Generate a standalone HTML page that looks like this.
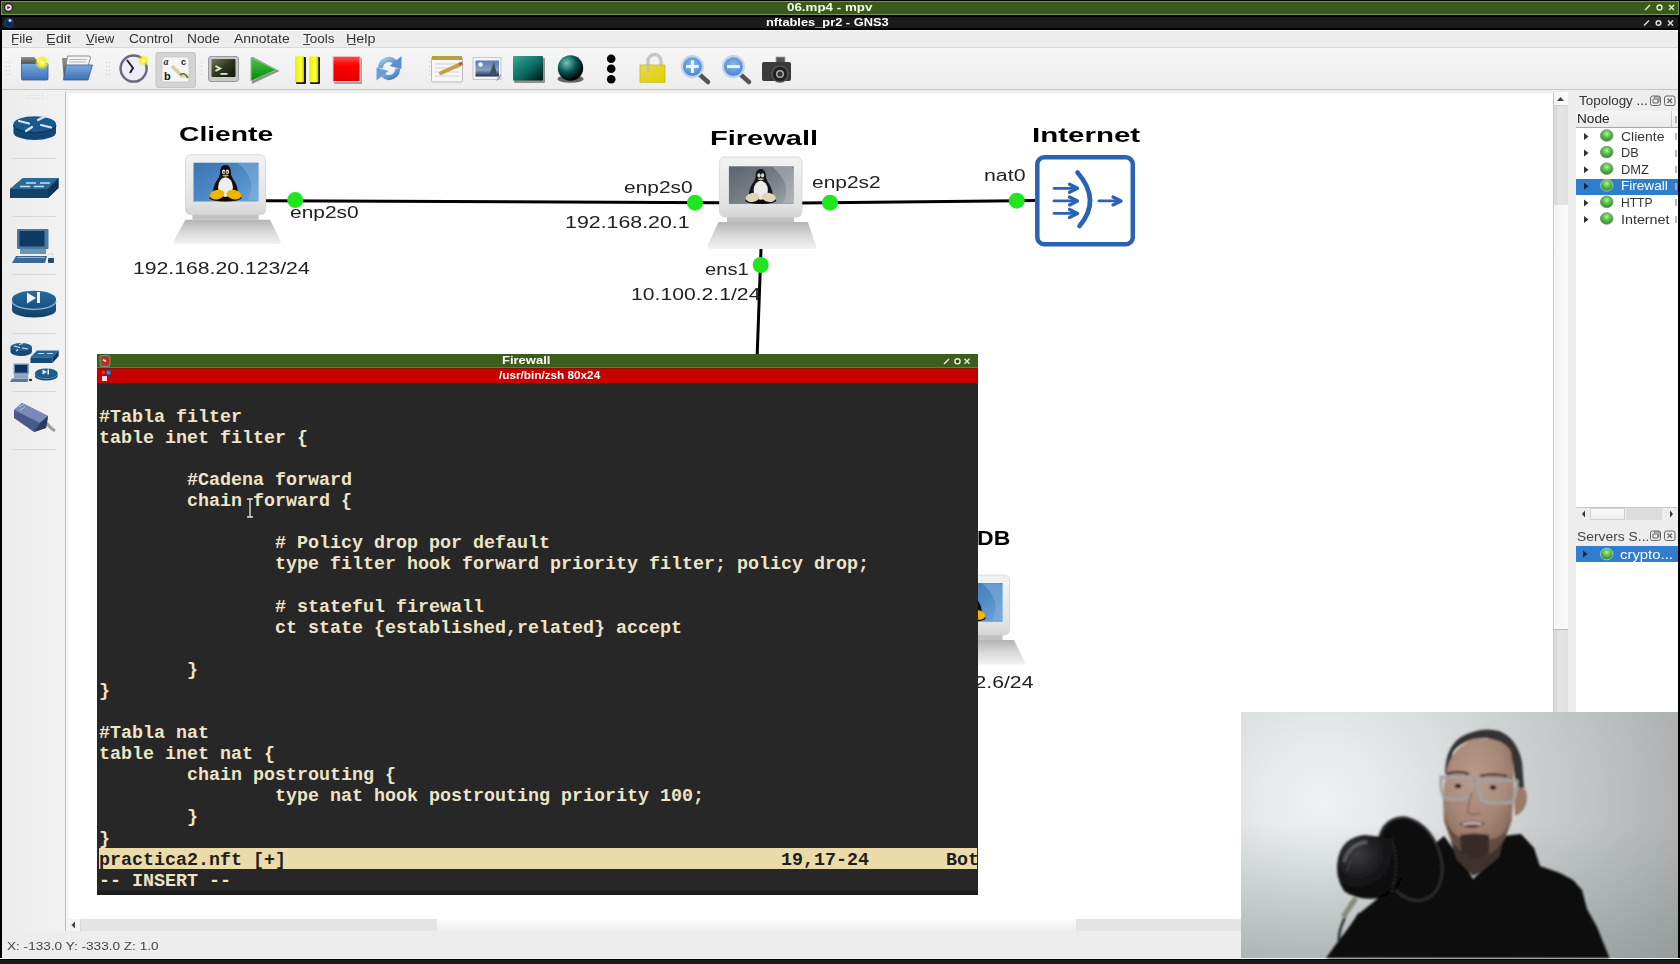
<!DOCTYPE html>
<html><head><meta charset="utf-8">
<style>
*{margin:0;padding:0;box-sizing:border-box}
html,body{width:1680px;height:964px;overflow:hidden;background:#000;font-family:"Liberation Sans",sans-serif;position:relative}
.a{position:absolute}
.lb{white-space:pre;transform-origin:0 0}
.term{font-family:"Liberation Mono",monospace;font-weight:bold;font-size:18.33px;line-height:21.1px;color:#eee4c8;white-space:pre}
svg{position:absolute;overflow:visible}
</style></head><body>
<!-- title bars -->
<div class="a" style="left:1px;top:1px;width:1678px;height:14px;background:#3a5a1b;border:1px solid #77925c"></div>
<div class="a" style="left:2px;top:16.7px;width:1676px;height:11.5px;background:#1b1b1b"></div>
<svg style="left:0;top:0" width="1680" height="30">
  <circle cx="8.5" cy="7.5" r="4.5" fill="#2a1a2a"/><circle cx="8.5" cy="7.5" r="3.3" fill="#f2d8f2"/><path d="M7.3 5.7 L10.3 7.5 L7.3 9.3Z" fill="#4a1a4a"/>
  <circle cx="9" cy="23" r="5" fill="#1a3a6a"/><circle cx="9" cy="23.5" r="3.5" fill="#0a2a5a"/><circle cx="10" cy="20.5" r="1.5" fill="#c8d8f8"/>
  <g stroke="#e8f0e0" stroke-width="1.3" fill="none">
    <path d="M1645 10 L1650 5"/><circle cx="1659.5" cy="7.5" r="2.5"/><path d="M1669 5 L1674 10 M1674 5 L1669 10"/>
  </g>
  <g stroke="#e0e0e0" stroke-width="1.5" fill="none">
    <path d="M1644 25.5 L1649 20.5"/><circle cx="1658.5" cy="23" r="2.3"/><path d="M1668 20.5 L1673 25.5 M1673 20.5 L1668 25.5"/>
  </g>
</svg>

<!-- main window -->
<div class="a" style="left:2px;top:29.5px;width:1676px;height:929.5px;background:#ededed"></div>
<div class="a" style="left:2px;top:29.5px;width:1676px;height:1.3px;background:#fafafa"></div>
<div class="a" style="left:2px;top:47px;width:1676px;height:1px;background:#dadada"></div>
<!-- menu underlines -->
<div class="a" style="left:12px;top:44px;width:6px;height:1px;background:#444"></div>
<div class="a" style="left:47.5px;top:44px;width:7px;height:1px;background:#444"></div>
<div class="a" style="left:85.5px;top:44px;width:8px;height:1px;background:#444"></div>
<div class="a" style="left:302.5px;top:44px;width:7px;height:1px;background:#444"></div>
<div class="a" style="left:347.5px;top:44px;width:8px;height:1px;background:#444"></div>
<!-- toolbar -->
<div class="a" style="left:2px;top:48px;width:1676px;height:41px;background:linear-gradient(#f6f6f6,#ededed)"></div>
<div class="a" style="left:2px;top:89px;width:1676px;height:1px;background:#c6c6c6"></div>
<svg style="left:0;top:0" width="800" height="92">
  <defs>
    <linearGradient id="fblue" x1="0" y1="0" x2="0" y2="1"><stop offset="0" stop-color="#7aaae0"/><stop offset="1" stop-color="#3a6fb8"/></linearGradient>
    <linearGradient id="fgray" x1="0" y1="0" x2="0" y2="1"><stop offset="0" stop-color="#909090"/><stop offset="1" stop-color="#505050"/></linearGradient>
    <radialGradient id="yel" cx="0.5" cy="0.5" r="0.5"><stop offset="0" stop-color="#ffffe0"/><stop offset="0.45" stop-color="#f4f020"/><stop offset="1" stop-color="#f4f020" stop-opacity="0"/></radialGradient>
    <linearGradient id="term" x1="0" y1="0" x2="1" y2="1"><stop offset="0" stop-color="#707a50"/><stop offset="0.5" stop-color="#2e3620"/><stop offset="1" stop-color="#101808"/></linearGradient>
    <linearGradient id="play" x1="0" y1="0" x2="0" y2="1"><stop offset="0" stop-color="#50c050"/><stop offset="1" stop-color="#008a00"/></linearGradient>
    <linearGradient id="pause" x1="0" y1="0" x2="1" y2="0"><stop offset="0" stop-color="#e8f000"/><stop offset="0.7" stop-color="#ffff40"/><stop offset="1" stop-color="#c0c000"/></linearGradient>
    <linearGradient id="stop" x1="0" y1="0" x2="0" y2="1"><stop offset="0" stop-color="#ff5050"/><stop offset="0.35" stop-color="#ff0000"/><stop offset="1" stop-color="#e00000"/></linearGradient>
    <linearGradient id="refr" x1="0" y1="0" x2="1" y2="1"><stop offset="0" stop-color="#a8c8ea"/><stop offset="1" stop-color="#3a78c0"/></linearGradient>
    <linearGradient id="teal" x1="0" y1="0" x2="1" y2="1"><stop offset="0" stop-color="#3aa898"/><stop offset="0.55" stop-color="#0a6a60"/><stop offset="1" stop-color="#001010"/></linearGradient>
    <radialGradient id="sph" cx="0.35" cy="0.3" r="0.7"><stop offset="0" stop-color="#70c8c0"/><stop offset="0.5" stop-color="#0a5a58"/><stop offset="1" stop-color="#000"/></radialGradient>
    <linearGradient id="lock" x1="0" y1="0" x2="1" y2="1"><stop offset="0" stop-color="#e8d850"/><stop offset="1" stop-color="#e0d000"/></linearGradient>
    <radialGradient id="zoom" cx="0.5" cy="0.4" r="0.55"><stop offset="0" stop-color="#8ab8ee"/><stop offset="1" stop-color="#4a88d0"/></radialGradient>
    <linearGradient id="img" x1="0" y1="0" x2="0" y2="1"><stop offset="0" stop-color="#5a7ab0"/><stop offset="0.6" stop-color="#8aa0c0"/><stop offset="1" stop-color="#1a2a50"/></linearGradient>
  </defs>
  <!-- handles -->
  <g fill="#c8c8c8">
    <rect x="6" y="62" width="1" height="1"/><rect x="9" y="62" width="1" height="1"/><rect x="6" y="66" width="1" height="1"/><rect x="9" y="66" width="1" height="1"/><rect x="6" y="70" width="1" height="1"/><rect x="9" y="70" width="1" height="1"/><rect x="6" y="74" width="1" height="1"/><rect x="9" y="74" width="1" height="1"/>
    <rect x="106" y="62" width="1" height="1"/><rect x="109" y="62" width="1" height="1"/><rect x="106" y="66" width="1" height="1"/><rect x="109" y="66" width="1" height="1"/><rect x="106" y="70" width="1" height="1"/><rect x="109" y="70" width="1" height="1"/><rect x="106" y="74" width="1" height="1"/><rect x="109" y="74" width="1" height="1"/>
    <rect x="201" y="62" width="1" height="1"/><rect x="201" y="66" width="1" height="1"/><rect x="201" y="70" width="1" height="1"/><rect x="201" y="74" width="1" height="1"/>
    <rect x="429" y="62" width="1" height="1"/><rect x="429" y="66" width="1" height="1"/><rect x="429" y="70" width="1" height="1"/><rect x="429" y="74" width="1" height="1"/>
  </g>
  <!-- new folder -->
  <path d="M21 57 L34 57 L37 60 L37 64 L21 64Z" fill="url(#fgray)"/>
  <rect x="21.5" y="63.5" width="26.5" height="16.5" rx="1" fill="url(#fblue)" stroke="#3a5a8a" stroke-width="0.8"/>
  <circle cx="42" cy="62.5" r="7.5" fill="url(#yel)"/>
  <!-- open folder -->
  <path d="M62 58 L69 58 L69 80 L64 80Z" fill="url(#fgray)"/>
  <path d="M67.5 56 L89 56 Q91 56 90.5 58 L88 66 L66 66Z" fill="#f4f4f4" stroke="#909090" stroke-width="1"/>
  <path d="M69 59.5 H87 M69 62 H86" stroke="#b8b8b8" stroke-width="1"/>
  <path d="M66 65 L92.5 65 L88 80 L63.5 80Z" fill="url(#fblue)" stroke="#3a5a8a" stroke-width="0.8"/>
  <!-- clock -->
  <circle cx="133.6" cy="68.6" r="13" fill="#eeeef6" stroke="#6a6a7a" stroke-width="2.5"/>
  <path d="M127 60 L133 68 L130 73" stroke="#222" stroke-width="2" fill="none"/>
  <circle cx="143.5" cy="60.5" r="6" fill="url(#yel)"/>
  <!-- abc pressed -->
  <rect x="156" y="52.5" width="39.5" height="35" rx="2" fill="#d4d4d4" stroke="#c4c4c4" stroke-width="1"/>
  <rect x="162" y="57" width="27" height="25" rx="2.5" fill="#f6f6f6" stroke="#c8c8c8" stroke-width="0.8"/>
  <text x="163.5" y="65" font-family="Liberation Serif" font-style="italic" font-weight="bold" font-size="10" fill="#333">a</text>
  <text x="164" y="80" font-family="Liberation Sans" font-weight="bold" font-size="11" fill="#111">b</text>
  <text x="181" y="65" font-family="Liberation Sans" font-weight="bold" font-size="9" fill="#222">c</text>
  <path d="M172 66 L182 76 Q186 74 188 78" stroke="#d8d0a0" stroke-width="3.5" fill="none"/>
  <path d="M180 75 Q184 71 188 78" stroke="#444" stroke-width="1.2" fill="none"/>
  <!-- terminal -->
  <rect x="208.5" y="56.5" width="30" height="25" rx="2.5" fill="#c8c8c8" stroke="#9a9a9a" stroke-width="1"/>
  <rect x="211.5" y="59" width="24" height="18" rx="1" fill="url(#term)"/>
  <path d="M215.5 66 L220 68.5 L215.5 71" stroke="#e0f0d0" stroke-width="2" fill="none"/>
  <rect x="220.5" y="73" width="7" height="1.8" fill="#d8e8c8"/>
  <!-- play -->
  <path d="M252 56.5 L279.5 71 L252 84Z" fill="#444" opacity="0.55"/>
  <path d="M251 57.5 L276 70 L251 81Z" fill="url(#play)" stroke="#7ac87a" stroke-width="1"/>
  <!-- pause -->
  <rect x="296" y="57" width="10" height="27" rx="1" fill="#1a1a1a"/>
  <rect x="310" y="57" width="10" height="27" rx="1" fill="#1a1a1a"/>
  <rect x="295" y="56.2" width="9" height="26" rx="1" fill="url(#pause)"/>
  <rect x="309.3" y="56.2" width="9" height="26" rx="1" fill="url(#pause)"/>
  <!-- stop -->
  <rect x="334" y="58" width="28" height="26" fill="#888" opacity="0.7"/>
  <rect x="333" y="56.5" width="27" height="25" fill="url(#stop)" stroke="#f0c0c0" stroke-width="1"/>
  <!-- refresh -->
  <g fill="none" stroke="url(#refr)" stroke-width="5">
    <path d="M380.5 68 A8.5 8.5 0 0 1 395 62"/>
    <path d="M397.5 68.5 A8.5 8.5 0 0 1 383 75"/>
  </g>
  <path d="M401.5 56 L401.5 69 L389.5 66Z" fill="#5a90d0"/>
  <path d="M376.5 80.5 L376.5 67.5 L388.5 71Z" fill="#6a9cd8"/>
  <!-- notepad -->
  <rect x="431.5" y="57" width="31" height="25" rx="1.5" fill="#f6f6f6" stroke="#b8b8b8" stroke-width="1"/>
  <rect x="432" y="56" width="30" height="4" fill="#b8a040"/>
  <path d="M435 64 H459 M435 68 H459 M435 72 H459 M435 76 H459" stroke="#d0d0d8" stroke-width="1"/>
  <path d="M441 73 L461 64" stroke="#c8a040" stroke-width="4" stroke-linecap="round"/>
  <path d="M459 64.5 L462 63" stroke="#a06040" stroke-width="3"/>
  <!-- image -->
  <rect x="473" y="57.5" width="28" height="22" fill="#f4f4f4" stroke="#c8c8d0" stroke-width="1"/>
  <rect x="475.5" y="60.5" width="23.5" height="16" fill="url(#img)"/>
  <circle cx="480.5" cy="64.5" r="2.3" fill="#f0f4ff"/>
  <path d="M489 75 L494 62 L497 75Z" fill="#405070"/>
  <path d="M496 81 Q501 79 501 74 L498 77Z" fill="#a0a0a8"/>
  <!-- teal rect -->
  <rect x="514" y="58" width="31" height="25" rx="1" fill="#303030" opacity="0.5"/>
  <rect x="513" y="56" width="30" height="24.5" rx="1" fill="url(#teal)"/>
  <!-- sphere -->
  <ellipse cx="570.5" cy="79" rx="13" ry="3.8" fill="#333" opacity="0.75"/>
  <circle cx="570.5" cy="68" r="12.7" fill="url(#sph)"/>
  <!-- dots -->
  <circle cx="611.2" cy="58.8" r="4.3" fill="#000"/><circle cx="611.2" cy="68.8" r="4.3" fill="#000"/><circle cx="611.2" cy="79.2" r="4.3" fill="#000"/>
  <!-- lock -->
  <path d="M648 67 L648 61 A6.5 6.5 0 0 1 661 61 L661 66" stroke="#c8c8c8" stroke-width="3.5" fill="none"/>
  <rect x="640" y="65" width="25" height="17.3" fill="url(#lock)" stroke="#c8b820" stroke-width="0.8"/>
  <path d="M648 65 L648 72" stroke="#c0c0b0" stroke-width="2.5"/>
  <!-- zoom in -->
  <path d="M699 74 L708 82" stroke="#555" stroke-width="4.5" stroke-linecap="round"/>
  <circle cx="692.4" cy="66.6" r="10.5" fill="url(#zoom)" stroke="#c0d4ea" stroke-width="2.2"/>
  <path d="M686 66.6 H698.8 M692.4 60.2 V73" stroke="#f0f6ff" stroke-width="3"/>
  <!-- zoom out -->
  <path d="M740 74 L749 82" stroke="#555" stroke-width="4.5" stroke-linecap="round"/>
  <circle cx="733.4" cy="66.6" r="10.5" fill="url(#zoom)" stroke="#c0d4ea" stroke-width="2.2"/>
  <path d="M727 66.6 H739.8" stroke="#f0f6ff" stroke-width="3"/>
  <!-- camera -->
  <rect x="776" y="57" width="9" height="6" fill="#555" stroke="#aaa" stroke-width="0.8"/>
  <path d="M762 64 Q762 62 764 62 L789 62 Q791 62 791 64 L791 79 Q791 81 789 81 L764 81 Q762 81 762 79Z" fill="#3a3a3a"/>
  <circle cx="780" cy="74" r="8" fill="#222" stroke="#555" stroke-width="1.5"/>
  <circle cx="780" cy="74" r="4" fill="#aaa"/>
  <circle cx="780" cy="74" r="2.5" fill="#333"/>
</svg>


<!-- left dock -->
<div class="a" style="left:2px;top:90px;width:63px;height:841px;background:linear-gradient(90deg,#ececec,#f2f2f2)"></div>
<div class="a" style="left:65px;top:92px;width:1px;height:839px;background:#bcbcbc"></div>
<svg style="left:0;top:0" width="70" height="964">
  <defs>
    <linearGradient id="cb" x1="0" y1="0" x2="0" y2="1"><stop offset="0" stop-color="#1f6494"/><stop offset="1" stop-color="#123e66"/></linearGradient>
    <linearGradient id="ct" x1="0" y1="0" x2="0" y2="1"><stop offset="0" stop-color="#2a6a9a"/><stop offset="1" stop-color="#1a5282"/></linearGradient>
  </defs>
  <g fill="#d0d0d0">
    <rect x="27" y="95" width="1" height="1"/><rect x="30" y="95" width="1" height="1"/><rect x="33" y="95" width="1" height="1"/><rect x="36" y="95" width="1" height="1"/><rect x="39" y="95" width="1" height="1"/><rect x="42" y="95" width="1" height="1"/>
    <rect x="27" y="98" width="1" height="1"/><rect x="30" y="98" width="1" height="1"/><rect x="33" y="98" width="1" height="1"/><rect x="36" y="98" width="1" height="1"/><rect x="39" y="98" width="1" height="1"/><rect x="42" y="98" width="1" height="1"/>
  </g>
  <g stroke="#d8d8d8" stroke-width="1">
    <path d="M12 158.5 H56 M12 216.5 H56 M12 274.5 H56 M12 333.5 H56 M12 391.5 H56 M12 449.5 H56"/>
  </g>
  <!-- router -->
  <path d="M13.5 124 L13.5 132.5 A21.25 7.5 0 0 0 56 132.5 L56 124Z" fill="#134676"/>
  <ellipse cx="34.75" cy="124" rx="21.25" ry="7.8" fill="#1c5a8c"/>
  <path d="M13.5 125 A21.25 7.8 0 0 0 56 125" stroke="#0c3458" stroke-width="1" fill="none"/>
  <g stroke="#d8e8f4" stroke-width="2.2" stroke-linecap="round">
    <path d="M19 121 L29 123.5 M41 125 L51 127.5 M32 127 L26 131 M38 120 L45 116.5"/>
  </g>
  <!-- switch -->
  <path d="M10 189 L23 178 L58.5 178 L58.5 188 L48 198 L10 198Z" fill="#12426a"/>
  <path d="M10 189 L23 178 L58.5 178 L48 189Z" fill="#2a6a98"/>
  <path d="M48 189 L58.5 178 L58.5 188 L48 198Z" fill="#0e3558"/>
  <g stroke="#c8e0f0" stroke-width="1.6"><path d="M26 183 H36 M40 183 H50 M20 186.5 H30 M34 186.5 H44"/></g>
  <!-- pc -->
  <rect x="17" y="229" width="31.5" height="20" rx="1" fill="#4a7aa0"/>
  <rect x="19.5" y="231" width="25" height="15.5" fill="#0f3a64"/>
  <rect x="20" y="249" width="26" height="5" fill="#6a94b8"/>
  <path d="M16 256 L47 256 L45 263 L12 263Z" fill="#3a6a94"/>
  <path d="M17 257.5 L45 257.5" stroke="#8ab4d8" stroke-width="1"/>
  <rect x="48" y="258" width="6" height="5" rx="1" fill="#2a4a6a"/>
  <path d="M47 255 Q55 251 52 258" stroke="#c8d8e8" stroke-width="1" fill="none"/>
  <!-- media device -->
  <path d="M12 299 L12 310 A22 7.5 0 0 0 56 310 L56 299Z" fill="url(#cb)"/>
  <ellipse cx="34" cy="299" rx="22" ry="8.3" fill="url(#ct)"/>
  <path d="M12 301 A22 8.3 0 0 0 56 301" stroke="#8ab8dc" stroke-width="1.2" fill="none"/>
  <path d="M27 292.5 L36 298 L27 303.5Z" fill="#eef4f8"/>
  <rect x="37" y="292" width="3" height="11" fill="#eef4f8"/>
  <!-- all devices -->
  <path d="M10.5 347 L10.5 352 A10.7 4 0 0 0 31.9 352 L31.9 347Z" fill="#154a78"/>
  <ellipse cx="21.2" cy="347" rx="10.7" ry="4" fill="#1e5e8e"/>
  <path d="M14 346 L20 347.5 M22 348 L28 349 M19 344.5 L23 343.5 M18 349.5 L16 351" stroke="#d0e4f0" stroke-width="1.2"/>
  <path d="M30.5 357.3 L37 350.4 L58.7 350.4 L52.5 357.3Z" fill="#2a6898"/>
  <path d="M30.5 357.3 L52.5 357.3 L52.5 363 L30.5 363Z" fill="#154a78"/>
  <path d="M52.5 357.3 L58.7 350.4 L58.7 356 L52.5 363Z" fill="#0e3a60"/>
  <path d="M38 353.5 H44 M47 353.5 H53" stroke="#b8d4e8" stroke-width="1"/>
  <rect x="13.6" y="363.6" width="15.1" height="11" fill="#6a8cb0"/><rect x="15" y="365" width="12.3" height="7.5" fill="#102e5e"/>
  <path d="M14 375 L28 375 L28 378 L14 378Z" fill="#8aa4c0"/>
  <path d="M12 378.5 L28.5 378.5 L27.5 382 L10 382Z" fill="#5a7a9a"/>
  <ellipse cx="30.5" cy="380" rx="1.6" ry="1.3" fill="#333"/>
  <path d="M35 373 L35 376.5 A11.3 4 0 0 0 57.6 376.5 L57.6 373Z" fill="#154a78"/>
  <ellipse cx="46.3" cy="373" rx="11.3" ry="4.6" fill="#1e5e8e"/>
  <path d="M35 374 A11.3 4.6 0 0 0 57.6 374" stroke="#6a9ac0" stroke-width="0.8" fill="none"/>
  <path d="M42.5 369.5 L47 372 L42.5 374.5Z" fill="#eef4f8"/><rect x="47.5" y="369.5" width="1.5" height="5" fill="#eef4f8"/>
  <!-- cable -->
  <path d="M44 420 Q50 428 55 431" stroke="#888" stroke-width="3" fill="none" opacity="0.8"/>
  <path d="M14 410 L22 403 L48 416 L46 428 L34 432 L14 418Z" fill="#4a5a88"/>
  <path d="M14 410 L22 403 L48 416 L40 423Z" fill="#7a8ab8"/>
  <path d="M40 423 L48 416 L46 428 L34 432Z" fill="#2a3a60"/>
  <path d="M19 407 L24 404 M20 410 L25 407" stroke="#c8d0e8" stroke-width="0.8"/>
</svg>


<!-- canvas -->
<div class="a" style="left:66px;top:92.5px;width:1487px;height:826.5px;background:linear-gradient(90deg,#f4f4f4,#fff 5px)"></div>
<svg style="left:0;top:0" width="1680" height="964">
  <defs>
    <linearGradient id="mon" x1="0" y1="0" x2="0" y2="1"><stop offset="0" stop-color="#f2f2f2"/><stop offset="0.8" stop-color="#e2e2e2"/><stop offset="1" stop-color="#d4d4d4"/></linearGradient>
    <linearGradient id="base" x1="0" y1="0" x2="0" y2="1"><stop offset="0" stop-color="#b4b4b4"/><stop offset="0.55" stop-color="#dcdcdc"/><stop offset="1" stop-color="#f2f2f2"/></linearGradient>
    <linearGradient id="scrB" x1="0" y1="0" x2="1" y2="1"><stop offset="0" stop-color="#3a74b4"/><stop offset="0.55" stop-color="#4f8ac6"/><stop offset="1" stop-color="#6fa4d6"/></linearGradient>
    <linearGradient id="scrG" x1="0" y1="0" x2="1" y2="1"><stop offset="0" stop-color="#5c636c"/><stop offset="0.55" stop-color="#7a8088"/><stop offset="1" stop-color="#a0a6ac"/></linearGradient>
    <symbol id="tuxc" viewBox="0 0 33 37" overflow="visible">
      <ellipse cx="16.5" cy="33.3" rx="16.3" ry="3.7" fill="#0a0a0a"/>
      <path d="M16.5 0 C12.5 0 11 3.5 11 8 C11 12 7.5 15 5.5 20 C3.5 25 3.5 29 6 31 L27 31 C29.5 29 29.5 25 27.5 20 C25.5 15 22 12 22 8 C22 3.5 20.5 0 16.5 0Z" fill="#0d0d0d"/>
      <ellipse cx="16.5" cy="22.5" rx="7.5" ry="10" fill="#eeeeee"/>
      <ellipse cx="14.6" cy="6.8" rx="1.7" ry="2.2" fill="#e8e8e8"/><ellipse cx="18.4" cy="6.8" rx="1.7" ry="2.2" fill="#e8e8e8"/>
      <circle cx="14.9" cy="7.2" r="0.8" fill="#111"/><circle cx="18.1" cy="7.2" r="0.8" fill="#111"/>
      <path d="M13 10.5 Q16.5 8.8 20 10.5 Q16.5 13.5 13 10.5Z" fill="#e8a800"/>
      <ellipse cx="8" cy="30" rx="7.5" ry="4.8" transform="rotate(-12 8 30)" fill="#f2b400"/>
      <ellipse cx="25" cy="30" rx="7.5" ry="4.8" transform="rotate(12 25 30)" fill="#f2b400"/>
    </symbol>
    <symbol id="tuxg" viewBox="0 0 33 37" overflow="visible">
      <ellipse cx="16.5" cy="33.3" rx="16.3" ry="3.7" fill="#0a0a0a"/>
      <path d="M16.5 0 C12.5 0 11 3.5 11 8 C11 12 7.5 15 5.5 20 C3.5 25 3.5 29 6 31 L27 31 C29.5 29 29.5 25 27.5 20 C25.5 15 22 12 22 8 C22 3.5 20.5 0 16.5 0Z" fill="#151515"/>
      <ellipse cx="16.5" cy="22.5" rx="7.5" ry="10" fill="#ececec"/>
      <ellipse cx="14.6" cy="6.8" rx="1.7" ry="2.2" fill="#d8d8d8"/><ellipse cx="18.4" cy="6.8" rx="1.7" ry="2.2" fill="#d8d8d8"/>
      <path d="M13 10.5 Q16.5 8.8 20 10.5 Q16.5 13.5 13 10.5Z" fill="#c8c0a0"/>
      <ellipse cx="8" cy="30" rx="7.5" ry="4.8" transform="rotate(-12 8 30)" fill="#ddd6b8"/>
      <ellipse cx="25" cy="30" rx="7.5" ry="4.8" transform="rotate(12 25 30)" fill="#ddd6b8"/>
    </symbol>
  </defs>
  <!-- links -->
  <g stroke="#000" stroke-width="3" fill="none">
    <path d="M266 200.8 L720 202.8"/>
    <path d="M802 203 L1035 200.5"/>
    <path d="M761 249 L757 360"/>
  </g>
  <!-- Cliente laptop -->
  <g id="lapC">
    <path d="M185.5 219.8 L270 219.8 L280.5 241 Q282 244.3 278 244.3 L176 244.3 Q172 244.3 173.5 241Z" fill="url(#base)"/>
    <rect x="192.4" y="213" width="66.2" height="6.8" fill="#c2c2c2"/>
    <rect x="185.5" y="154.7" width="80" height="60" rx="5" fill="url(#mon)" stroke="#d2d2d2" stroke-width="0.8"/>
    <rect x="193.5" y="162.7" width="65" height="38.8" fill="url(#scrB)"/>
    <path d="M238 163 L254 163 Q258.5 163 258.5 168 L258.5 200 L248 200 Q258 180 238 163Z" fill="#8ab8e4" opacity="0.45"/>
    <use href="#tuxc" x="209" y="165" width="33" height="36.5"/>
  </g>
  <!-- DB laptop -->
  <use href="#lapC" x="744" y="420.3"/>
  <!-- Firewall laptop -->
  <path d="M718.5 221.9 L807.8 221.9 L816 245.5 Q817 249 813 249 L711 249 Q706.5 249 707.5 245.5Z" fill="url(#base)"/>
  <rect x="727" y="216" width="67" height="6" fill="#c2c2c2"/>
  <rect x="719.6" y="157" width="82.3" height="60" rx="5" fill="url(#mon)" stroke="#d2d2d2" stroke-width="0.8"/>
  <rect x="728.9" y="166.3" width="64.8" height="37.7" fill="url(#scrG)"/>
  <path d="M772 166.5 L789 166.5 Q793.5 166.5 793.5 171 L793.5 203 L783 203 Q793 184 772 166.5Z" fill="#c0c4c8" opacity="0.45"/>
  <use href="#tuxg" x="743.6" y="169" width="34.3" height="35"/>
  <!-- Internet NAT -->
  <rect x="1037.3" y="157.3" width="95.5" height="87" rx="7" fill="#fff" stroke="#2a62b6" stroke-width="4.5"/>
  <g stroke="#2a62b6" fill="none" stroke-linecap="round" stroke-linejoin="round">
    <path d="M1054 188.3 H1076 M1054 200.9 H1076 M1054 213.4 H1076" stroke-width="2.8"/>
    <path d="M1069.5 184.3 L1077.5 188.3 L1069.5 192.3 M1069.5 196.9 L1077.5 200.9 L1069.5 204.9 M1069.5 209.4 L1077.5 213.4 L1069.5 217.4" stroke-width="3.3"/>
    <path d="M1077.5 172.5 Q1101.5 200 1079.5 226" stroke-width="4.6"/>
    <path d="M1099 200.9 H1119" stroke-width="2.8"/>
    <path d="M1113 196.9 L1121 200.9 L1113 204.9" stroke-width="3.3"/>
  </g>
  <!-- port dots -->
  <g fill="#1fe61f">
    <circle cx="295.2" cy="200.1" r="8"/>
    <circle cx="695" cy="202.7" r="8"/>
    <circle cx="830" cy="202.7" r="8"/>
    <circle cx="1016.7" cy="200.7" r="8"/>
    <circle cx="760.7" cy="265" r="8"/>
  </g>
</svg>


<!-- vertical scrollbar -->
<div class="a" style="left:1553px;top:92px;width:15px;height:620px;background:linear-gradient(90deg,#f4f4f4,#fafafa)"></div>
<div class="a" style="left:1553px;top:92px;width:1px;height:620px;background:#c8c8c8"></div>
<div class="a" style="left:1553px;top:105px;width:15px;height:1px;background:#d0d0d0"></div>
<div class="a" style="left:1554px;top:106px;width:14px;height:99px;background:linear-gradient(90deg,#d8d8d8,#e4e4e4 40%,#e0e0e0)"></div>
<div class="a" style="left:1554px;top:629px;width:14px;height:83px;background:linear-gradient(90deg,#d8d8d8,#e4e4e4 40%,#e0e0e0)"></div>
<div class="a" style="left:1553px;top:629px;width:15px;height:1px;background:#b8b8b8"></div>
<svg style="left:0;top:0" width="1680" height="964"><path d="M1557 101 L1560.5 97 L1564 101Z" fill="#444"/></svg>

<!-- right dock -->
<div class="a" style="left:1568px;top:90px;width:110px;height:622px;background:#ededed"></div>
<div class="a" style="left:1576px;top:111px;width:102px;height:17px;background:linear-gradient(#f6f6f6,#eaeaea)"></div>
<div class="a" style="left:1576px;top:127px;width:102px;height:1px;background:#a8a8a8"></div>
<div class="a" style="left:1671px;top:111px;width:1px;height:16px;background:#c8c8c8"></div>
<div class="a" style="left:1576px;top:128px;width:102px;height:379px;background:#fff"></div>
<div class="a" style="left:1576px;top:178.6px;width:102px;height:16px;background:#2f7dcb"></div>
<div class="a" style="left:1576px;top:507px;width:102px;height:13px;background:#ededed;border-top:1px solid #c8c8c8"></div>
<div class="a" style="left:1590px;top:508px;width:35px;height:12px;background:linear-gradient(#fafafa,#eeeeee);border:1px solid #d0d0d0"></div>
<div class="a" style="left:1626px;top:508px;width:36px;height:12px;background:#dcdcdc"></div>
<div class="a" style="left:1576px;top:546px;width:102px;height:166px;background:#fff"></div>
<div class="a" style="left:1576px;top:546px;width:102px;height:15.7px;background:#2f7dcb"></div>
<svg style="left:0;top:0" width="1680" height="964">
  <defs>
    <radialGradient id="led" cx="0.5" cy="0.35" r="0.6"><stop offset="0" stop-color="#b8f0a8"/><stop offset="0.45" stop-color="#5cc84a"/><stop offset="1" stop-color="#3a8a30"/></radialGradient>
  </defs>
  <g fill="#333">
    <path d="M1584 133 L1588.5 136.5 L1584 140Z"/>
    <path d="M1584 149.6 L1588.5 153.1 L1584 156.6Z"/>
    <path d="M1584 166.2 L1588.5 169.7 L1584 173.2Z"/>
    <path d="M1584 182.8 L1588.5 186.3 L1584 189.8Z" fill="#0a2a4a"/>
    <path d="M1584 199.4 L1588.5 202.9 L1584 206.4Z"/>
    <path d="M1584 216 L1588.5 219.5 L1584 223Z"/>
    <path d="M1583 550.5 L1587.5 554 L1583 557.5Z" fill="#0a2a4a"/>
    <path d="M1582 514 L1585 510.5 L1585 517.5Z"/>
    <path d="M1673 514 L1670 510.5 L1670 517.5Z"/>
  </g>
  <g fill="url(#led)" stroke="#7a8a78" stroke-width="0.8">
    <ellipse cx="1606.7" cy="135.5" rx="6.3" ry="5.8"/>
    <ellipse cx="1606.7" cy="152.1" rx="6.3" ry="5.8"/>
    <ellipse cx="1606.7" cy="168.7" rx="6.3" ry="5.8"/>
    <ellipse cx="1606.7" cy="185.3" rx="6.3" ry="5.8" stroke="#a8d0f0"/>
    <ellipse cx="1606.7" cy="201.9" rx="6.3" ry="5.8"/>
    <ellipse cx="1606.7" cy="218.5" rx="6.3" ry="5.8"/>
    <ellipse cx="1606.7" cy="554" rx="6.3" ry="5.8" stroke="#a8d0f0"/>
  </g>
  <g stroke="#777" stroke-width="1">
    <path d="M1676 133 V140 M1676 150 V157 M1676 166 V173 M1676 199 V206 M1676 216 V223 M1676 116 V123"/>
    <path d="M1676 183 V190" stroke="#d8e8f8"/>
  </g>
  <g fill="none" stroke="#666" stroke-width="1">
    <rect x="1650.5" y="96" width="10" height="9.5" rx="2"/>
    <rect x="1664.5" y="96" width="10.5" height="9.5" rx="2"/>
    <path d="M1667.5 98.5 L1672 103 M1672 98.5 L1667.5 103" stroke-width="1.3"/>
    <path d="M1653 99 h5 v4 h-5z M1654.5 98 v-1 h4.5 v4.5 h-1"/>
    <rect x="1650.5" y="531" width="10" height="9.5" rx="2"/>
    <rect x="1664.5" y="531" width="10.5" height="9.5" rx="2"/>
    <path d="M1667.5 533.5 L1672 538 M1672 533.5 L1667.5 538" stroke-width="1.3"/>
    <path d="M1653 534 h5 v4 h-5z M1654.5 533 v-1 h4.5 v4.5 h-1"/>
  </g>
</svg>

<!-- bottom scrollbar and status -->
<div class="a" style="left:66px;top:919px;width:1487px;height:12px;background:#e4e4e4"></div>
<div class="a" style="left:66px;top:919px;width:15px;height:12px;background:#f4f4f4;border-right:1px solid #d8d8d8"></div>
<div class="a" style="left:437px;top:919px;width:639px;height:13px;background:linear-gradient(#fefefe,#f2f2f2 60%,#ededed)"></div>
<svg style="left:0;top:0" width="1680" height="964"><path d="M71.5 925 L75 921.5 L75 928.5Z" fill="#444"/></svg>
<div class="a" style="left:2px;top:931px;width:1676px;height:27px;background:#ededed"></div>
<div class="a" style="left:0;top:958px;width:1680px;height:1px;background:#f8f8f8"></div>
<div class="a" style="left:0;top:959px;width:1680px;height:1px;background:#000"></div>
<div class="a" style="left:0;top:960px;width:1680px;height:4px;background:#1c1c1c"></div>

<div class="a lb" style="left:786.70px;top:1.80px;font-family:'Liberation Sans';font-size:11px;line-height:11px;font-weight:bold;color:#f2ffe6;transform:scaleX(1.2143);">06.mp4 - mpv</div>
<div class="a lb" style="left:766.33px;top:16.80px;font-family:'Liberation Sans';font-size:11px;line-height:11px;font-weight:bold;color:#ffffff;transform:scaleX(1.1659);">nftables_pr2 - GNS3</div>
<div class="a lb" style="left:10.92px;top:32.60px;font-family:'Liberation Sans';font-size:12.5px;line-height:12.5px;font-weight:normal;color:#333;transform:scaleX(1.0789);">File</div>
<div class="a lb" style="left:46.34px;top:32.60px;font-family:'Liberation Sans';font-size:12.5px;line-height:12.5px;font-weight:normal;color:#333;transform:scaleX(1.1625);">Edit</div>
<div class="a lb" style="left:85.75px;top:32.60px;font-family:'Liberation Sans';font-size:12.5px;line-height:12.5px;font-weight:normal;color:#333;transform:scaleX(1.0556);">View</div>
<div class="a lb" style="left:128.51px;top:32.60px;font-family:'Liberation Sans';font-size:12.5px;line-height:12.5px;font-weight:normal;color:#333;transform:scaleX(1.0897);">Control</div>
<div class="a lb" style="left:186.90px;top:32.60px;font-family:'Liberation Sans';font-size:12.5px;line-height:12.5px;font-weight:normal;color:#333;transform:scaleX(1.0982);">Node</div>
<div class="a lb" style="left:233.75px;top:32.60px;font-family:'Liberation Sans';font-size:12.5px;line-height:12.5px;font-weight:normal;color:#333;transform:scaleX(1.1122);">Annotate</div>
<div class="a lb" style="left:302.50px;top:32.60px;font-family:'Liberation Sans';font-size:12.5px;line-height:12.5px;font-weight:normal;color:#333;transform:scaleX(1.0776);">Tools</div>
<div class="a lb" style="left:346.35px;top:32.60px;font-family:'Liberation Sans';font-size:12.5px;line-height:12.5px;font-weight:normal;color:#333;transform:scaleX(1.1458);">Help</div>
<div class="a lb" style="left:178.66px;top:123.10px;font-family:'Liberation Sans';font-size:21px;line-height:21px;font-weight:bold;color:#000;transform:scaleX(1.3441);">Cliente</div>
<div class="a lb" style="left:710.32px;top:127.00px;font-family:'Liberation Sans';font-size:21px;line-height:21px;font-weight:bold;color:#000;transform:scaleX(1.3816);">Firewall</div>
<div class="a lb" style="left:1031.90px;top:123.70px;font-family:'Liberation Sans';font-size:21px;line-height:21px;font-weight:bold;color:#000;transform:scaleX(1.4039);">Internet</div>
<div class="a lb" style="left:289.99px;top:205.30px;font-family:'Liberation Sans';font-size:16px;line-height:16px;font-weight:normal;color:#222;transform:scaleX(1.3078);">enp2s0</div>
<div class="a lb" style="left:133.27px;top:260.40px;font-family:'Liberation Sans';font-size:17.2px;line-height:17.2px;font-weight:normal;color:#222;transform:scaleX(1.2324);">192.168.20.123/24</div>
<div class="a lb" style="left:623.69px;top:180.30px;font-family:'Liberation Sans';font-size:16px;line-height:16px;font-weight:normal;color:#222;transform:scaleX(1.3078);">enp2s0</div>
<div class="a lb" style="left:564.76px;top:214.30px;font-family:'Liberation Sans';font-size:17.2px;line-height:17.2px;font-weight:normal;color:#222;transform:scaleX(1.2424);">192.168.20.1</div>
<div class="a lb" style="left:811.99px;top:175.30px;font-family:'Liberation Sans';font-size:16px;line-height:16px;font-weight:normal;color:#222;transform:scaleX(1.3078);">enp2s2</div>
<div class="a lb" style="left:983.67px;top:167.70px;font-family:'Liberation Sans';font-size:16px;line-height:16px;font-weight:normal;color:#222;transform:scaleX(1.3333);">nat0</div>
<div class="a lb" style="left:705.44px;top:262.00px;font-family:'Liberation Sans';font-size:16px;line-height:16px;font-weight:normal;color:#222;transform:scaleX(1.2606);">ens1</div>
<div class="a lb" style="left:630.77px;top:286.00px;font-family:'Liberation Sans';font-size:17.2px;line-height:17.2px;font-weight:normal;color:#222;transform:scaleX(1.2308);">10.100.2.1/24</div>
<div class="a lb" style="left:976.50px;top:527.20px;font-family:'Liberation Sans';font-size:21px;line-height:21px;font-weight:bold;color:#000;transform:scaleX(1.0966);">DB</div>
<div class="a lb" style="left:903.57px;top:674.00px;font-family:'Liberation Sans';font-size:17.2px;line-height:17.2px;font-weight:normal;color:#222;transform:scaleX(1.2308);">10.100.2.6/24</div>
<div class="a lb" style="left:1579.20px;top:94.70px;font-family:'Liberation Sans';font-size:12.5px;line-height:12.5px;font-weight:normal;color:#333;transform:scaleX(1.0762);">Topology ...</div>
<div class="a lb" style="left:1577.41px;top:112.70px;font-family:'Liberation Sans';font-size:12.5px;line-height:12.5px;font-weight:normal;color:#222;transform:scaleX(1.0893);">Node</div>
<div class="a lb" style="left:1620.58px;top:130.50px;font-family:'Liberation Sans';font-size:12.5px;line-height:12.5px;font-weight:normal;color:#333;transform:scaleX(1.1162);">Cliente</div>
<div class="a lb" style="left:1620.68px;top:147.10px;font-family:'Liberation Sans';font-size:12.5px;line-height:12.5px;font-weight:normal;color:#333;transform:scaleX(1.0187);">DB</div>
<div class="a lb" style="left:1620.67px;top:163.70px;font-family:'Liberation Sans';font-size:12.5px;line-height:12.5px;font-weight:normal;color:#333;transform:scaleX(1.0308);">DMZ</div>
<div class="a lb" style="left:1620.61px;top:180.30px;font-family:'Liberation Sans';font-size:12.5px;line-height:12.5px;font-weight:normal;color:#ffffff;transform:scaleX(1.0854);">Firewall</div>
<div class="a lb" style="left:1620.73px;top:196.90px;font-family:'Liberation Sans';font-size:12.5px;line-height:12.5px;font-weight:normal;color:#333;transform:scaleX(0.9677);">HTTP</div>
<div class="a lb" style="left:1620.56px;top:213.50px;font-family:'Liberation Sans';font-size:12.5px;line-height:12.5px;font-weight:normal;color:#333;transform:scaleX(1.1439);">Internet</div>
<div class="a lb" style="left:1577.49px;top:531.00px;font-family:'Liberation Sans';font-size:12.5px;line-height:12.5px;font-weight:normal;color:#444;transform:scaleX(1.1079);">Servers S...</div>
<div class="a lb" style="left:1619.81px;top:548.50px;font-family:'Liberation Sans';font-size:12.5px;line-height:12.5px;font-weight:normal;color:#ffffff;transform:scaleX(1.1905);">crypto...</div>
<div class="a lb" style="left:7.12px;top:940.70px;font-family:'Liberation Sans';font-size:11.5px;line-height:11.5px;font-weight:normal;color:#444;transform:scaleX(1.1811);">X: -133.0 Y: -333.0 Z: 1.0</div>
<div class="a lb" style="left:501.90px;top:356.20px;font-family:'Liberation Sans';font-size:10px;line-height:10px;font-weight:bold;color:#ffffff;transform:scaleX(1.3000);z-index:6;">Firewall</div>
<div class="a lb" style="left:498.50px;top:371.00px;font-family:'Liberation Sans';font-size:10px;line-height:10px;font-weight:bold;color:#ffffff;transform:scaleX(1.1744);z-index:6;">/usr/bin/zsh 80x24</div>

<div class="a" style="left:97px;top:354px;width:881px;height:541px;background:#272727;z-index:5">
  <div class="a" style="left:0;top:0;width:881px;height:14px;background:#3a5e1c;border-bottom:1px solid #6a7a3a"></div>
  <div class="a" style="left:0;top:14px;width:881px;height:16px;background:#c70000;border-top:1px solid #8a1000;border-bottom:1px solid #9a0000"></div>
  <div class="a" style="left:0;top:536.5px;width:881px;height:4.5px;background:#1d1d1d"></div>
  <div class="a" style="left:2px;top:494.2px;width:878px;height:20.8px;background:#ebdba9"></div>
  <svg style="left:0;top:0" width="881" height="40">
    <rect x="3" y="1.5" width="10" height="11" rx="1.5" fill="#5a6a4a" stroke="#8a9a7a" stroke-width="0.8"/>
    <rect x="4.5" y="3" width="7.5" height="7.5" rx="1.5" fill="#d42020"/>
    <path d="M6 5.5 L9 7.5" stroke="#f8e0e0" stroke-width="1.6"/>
    <rect x="5" y="22" width="5" height="5" fill="#e8e0e8"/>
    <circle cx="11.5" cy="18.5" r="2.6" fill="#3a80d8" stroke="#2a2a8a" stroke-width="0.6"/>
    <rect x="5" y="17" width="3" height="3" fill="#f03030"/>
    <g stroke="#e6eedf" stroke-width="1.4" fill="none">
      <path d="M847 10 L852 5"/><circle cx="860.5" cy="7.3" r="2.6"/><path d="M867.5 4.8 L872.5 9.8 M872.5 4.8 L867.5 9.8"/>
    </g>
    <circle cx="860.5" cy="7.3" r="1" fill="#1a2a10"/>
  </svg>
  <div class="a term" style="left:2px;top:31.6px">
#Tabla filter
table inet filter {

        #Cadena forward
        chain forward {

                # Policy drop por default
                type filter hook forward priority filter; policy drop;

                # stateful firewall
                ct state {established,related} accept

        }
}

#Tabla nat
table inet nat {
        chain postrouting {
                type nat hook postrouting priority 100;
        }
}
<span style="color:#1e1e1e">practica2.nft [+]                                             19,17-24       Bot</span>
-- INSERT --</div>
  <svg style="left:0;top:0" width="881" height="541">
    <path d="M150 145 L156 145 M153 145 L153 163 M150 163 L156 163" stroke="#222" stroke-width="3"/>
    <path d="M150 145 L156 145 M153 145 L153 163 M150 163 L156 163" stroke="#e0e0e0" stroke-width="1.4"/>
  </svg>
</div>


<svg style="left:1241px;top:712px;z-index:10" width="437" height="246" viewBox="0 0 437 246">
  <defs>
    <radialGradient id="bg1" gradientUnits="userSpaceOnUse" cx="80" cy="90" r="400">
      <stop offset="0" stop-color="#eef2f2"/><stop offset="0.15" stop-color="#e6eaea"/><stop offset="0.4" stop-color="#d4d8d8"/><stop offset="0.7" stop-color="#bec2c2"/><stop offset="1" stop-color="#a6aaaa"/>
    </radialGradient>
    <linearGradient id="bgb" x1="0" y1="0" x2="1" y2="1"><stop offset="0.45" stop-color="#7a8282" stop-opacity="0"/><stop offset="1" stop-color="#7a8282" stop-opacity="0.35"/></linearGradient>
    <linearGradient id="bgl" x1="0" y1="0" x2="0" y2="1"><stop offset="0.45" stop-color="#7c8484" stop-opacity="0"/><stop offset="1" stop-color="#7c8484" stop-opacity="0.4"/></linearGradient>
    <radialGradient id="skin" cx="0.45" cy="0.3" r="0.75"><stop offset="0" stop-color="#b89888"/><stop offset="0.55" stop-color="#a68676"/><stop offset="1" stop-color="#806254"/></radialGradient>
    <radialGradient id="micg" cx="0.3" cy="0.3" r="0.75"><stop offset="0" stop-color="#3c3c40"/><stop offset="0.55" stop-color="#161618"/><stop offset="1" stop-color="#060606"/></radialGradient>
    <filter id="bl" x="-10%" y="-10%" width="120%" height="120%"><feGaussianBlur stdDeviation="1"/></filter>
  </defs>
  <rect x="0" y="0" width="437" height="246" fill="url(#bg1)"/>
  <rect x="0" y="0" width="437" height="246" fill="url(#bgl)"/>
  <g filter="url(#bl)">
  <!-- hoodie -->
  <path d="M85 246 L98 228 L120 200 L160 168 L190 135 L203 124 L222 150 L232 167 L250 150 L262 124 L280 122 L293 136 L299 154 L319 161 L332 168 L341 178 L346 197 L356 215 L368.5 246Z" fill="#101011"/>
  <!-- neck skin -->
  <path d="M209 126 L223 142 L234 146 L250 140 L263 126 L258 145 L240 160 L232 164 L216 148Z" fill="#3e322e"/>
  <!-- hair -->
  <path d="M204 62 Q204 36 220 25 Q240 14 258 19 Q276 26 281 50 L283 76 L276 78 L272 52 Q266 32 246 26 Q222 26 212 40 L207 64Z" fill="#343232"/>
  <!-- ear -->
  <path d="M273 76 Q286 72 286 86 Q285 100 274 104Z" fill="#9a7a6a"/>
  <!-- face -->
  <path d="M205.5 59.4 Q209 38 231.9 27 Q262 24 270 40 L272.5 56 L272.5 82.4 L270.7 108.8 L263.6 126.4 L249.5 140.5 L233.7 145.8 L223.1 142.3 L209 126.4 L202.8 108.8 L201.9 82.4Z" fill="url(#skin)"/>
  <!-- eyebrows -->
  <path d="M206 62 Q216 58 228 62 M239 64 Q252 61 266 64" stroke="#4a3832" stroke-width="2.6" fill="none"/>
  <!-- glasses -->
  <path d="M200 65 L230 66 Q232 76 229 86 Q215 89 203 86 Q199 76 200 65Z" fill="#c0b0a8" fill-opacity="0.2" stroke="#a4a2a2" stroke-width="3"/>
  <path d="M237 67 L276 69 Q276 80 272 90 Q255 93 241 89 Q236 78 237 67Z" fill="#c0b0a8" fill-opacity="0.2" stroke="#a4a2a2" stroke-width="3"/>
  <path d="M230 68 L237 69" stroke="#9a9898" stroke-width="2"/>
  <ellipse cx="217" cy="74" rx="3.2" ry="2.2" fill="#2a1e1a"/>
  <ellipse cx="252" cy="75.5" rx="3.2" ry="2.2" fill="#2a1e1a"/>
  <!-- nose -->
  <path d="M231 80 Q226 96 227 101 Q233 104 240 101" stroke="#8a6a5c" stroke-width="1.8" fill="none"/>
  <!-- beard & mouth -->
  <path d="M203 100 Q206 126 220 138 Q234 148 250 142 Q266 132 271 102 Q266 124 252 127 Q238 124 222 127 Q208 122 203 100Z" fill="#5a463e" opacity="0.85"/>
  <path d="M219 123 Q233 120 248 123 L248 142 L234 147 L220 141Z" fill="#382a26"/>
  <path d="M218 112 Q230 107 244 111 Q232 121 218 112Z" fill="#6a4a44"/>
  <path d="M222 112.5 Q231 110 240 112" stroke="#e0d0c8" stroke-width="1.8" fill="none"/>
  <!-- mic stand / cable -->
  <path d="M110 190 L100 215 Q95 230 101 246" stroke="#2a2a2a" stroke-width="2.5" fill="none"/>
  <path d="M115 186 L102 205" stroke="#8a8a7c" stroke-width="5"/>
  <path d="M118 200 L140 246 L88 246 Z" fill="#101011"/>
  <!-- pop filter -->
  <ellipse cx="169" cy="147" rx="30" ry="43" transform="rotate(-22 169 147)" fill="#0c0c0c" stroke="#2e2e32" stroke-width="2.5"/>
  <!-- mic body -->
  <path d="M97 146 Q102 125 124 123 L150 126 Q167 138 163 162 Q157 183 140 186 Q116 189 103 179 Q93 163 97 146Z" fill="url(#micg)"/>
  <path d="M103 150 Q108 132 126 130" stroke="#5e5e64" stroke-width="3" fill="none"/>
  <path d="M106 160 Q108 146 118 140" stroke="#3a3a40" stroke-width="2" fill="none"/>
  <path d="M150 127 Q160 150 150 182" stroke="#2c2c30" stroke-width="2.5" fill="none" stroke-dasharray="2 2"/>
  <!-- cable drop -->
  
  </g>
</svg>

</body></html>
